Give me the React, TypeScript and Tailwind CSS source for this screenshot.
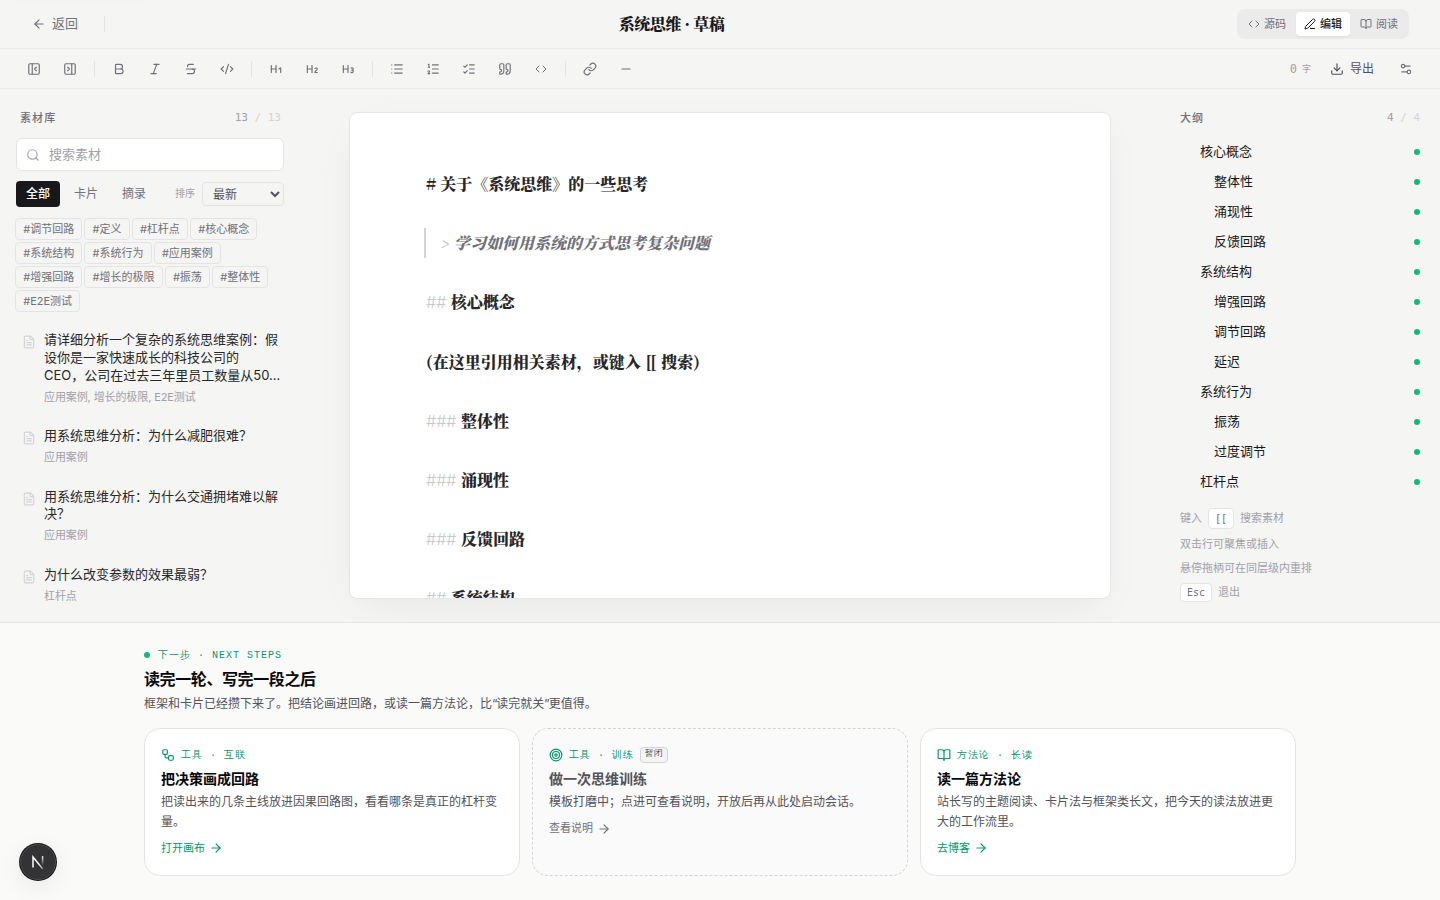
import {
  ArrowLeft,
  ArrowRight,
  Bold,
  BookOpen,
  Code,
  CodeXml,
  Download,
  FileText,
  Heading1,
  Heading2,
  Heading3,
  Italic,
  Link,
  List,
  ListChecks,
  ListOrdered,
  Minus,
  PanelLeftClose,
  PanelRightClose,
  PenLine,
  Quote,
  Search,
  Settings2,
  Strikethrough,
  Target,
  Workflow,
  type LucideIcon,
} from "lucide-react";

const toolGroups: LucideIcon[][] = [
  [PanelLeftClose, PanelRightClose],
  [Bold, Italic, Strikethrough, CodeXml],
  [Heading1, Heading2, Heading3],
  [List, ListOrdered, ListChecks, Quote, Code],
  [Link, Minus],
];

const tags = [
  "调节回路",
  "定义",
  "杠杆点",
  "核心概念",
  "系统结构",
  "系统行为",
  "应用案例",
  "增强回路",
  "增长的极限",
  "振荡",
  "整体性",
  "E2E测试",
];

const materials = [
  {
    title:
      "请详细分析一个复杂的系统思维案例：假设你是一家快速成长的科技公司的\nCEO，公司在过去三年里员工数量从50...",
    meta: "应用案例, 增长的极限, E2E测试",
  },
  { title: "用系统思维分析：为什么减肥很难？", meta: "应用案例" },
  { title: "用系统思维分析：为什么交通拥堵难以解决？", meta: "应用案例" },
  { title: "为什么改变参数的效果最弱？", meta: "杠杆点" },
];

const draft = [
  { mark: "##", text: "核心概念" },
  { mark: "", text: "(在这里引用相关素材，或键入 [[ 搜索)" },
  { mark: "###", text: "整体性" },
  { mark: "###", text: "涌现性" },
  { mark: "###", text: "反馈回路" },
  { mark: "##", text: "系统结构" },
];

const outline = [
  { text: "核心概念", level: 1 },
  { text: "整体性", level: 2 },
  { text: "涌现性", level: 2 },
  { text: "反馈回路", level: 2 },
  { text: "系统结构", level: 1 },
  { text: "增强回路", level: 2 },
  { text: "调节回路", level: 2 },
  { text: "延迟", level: 2 },
  { text: "系统行为", level: 1 },
  { text: "振荡", level: 2 },
  { text: "过度调节", level: 2 },
  { text: "杠杆点", level: 1 },
];

const steps = [
  {
    icon: Workflow,
    kind: "工具 · 互联",
    title: "把决策画成回路",
    desc: "把读出来的几条主线放进因果回路图，看看哪条是真正的杠杆变量。",
    link: "打开画布",
  },
  {
    icon: Target,
    kind: "工具 · 训练",
    title: "做一次思维训练",
    desc: "模板打磨中；点进可查看说明，开放后再从此处启动会话。",
    link: "查看说明",
    paused: true,
  },
  {
    icon: BookOpen,
    kind: "方法论 · 长读",
    title: "读一篇方法论",
    desc: "站长写的主题阅读、卡片法与框架类长文，把今天的读法放进更大的工作流里。",
    link: "去博客",
  },
];

const MONO = "font-['Liberation_Mono','WenQuanYi_Zen_Hei_Mono','WenQuanYi_Zen_Hei',monospace]";
const NUM = "font-['DejaVu_Sans_Mono',monospace]";
const SANS = "font-['Inter','Noto_Sans_CJK_SC',sans-serif]";
const SERIF = "font-['Noto_Serif_CJK_SC','Noto_Serif_SC',serif]";

const Divider = () => <div className="mx-1 h-4 w-px bg-[#e4e4e7]" />;

const Header = () => (
  <header className="flex h-[49px] shrink-0 items-center border-b border-[#e9e9ea] pl-8 pr-[31px]">
    <div className="absolute -top-12 left-4 h-9 w-32 rounded-md shadow-[0_8px_16px_rgba(0,0,0,0.05)]" />
    <button className="flex items-center gap-1.5 text-[13px] text-[#71717a]">
      <ArrowLeft size={14} />
      返回
    </button>
    <div className="ml-[26px] h-4 w-px bg-[#e4e4e7]" />
    <h1
      className={`flex-1 pl-px text-center text-base font-black tracking-tight text-[#18181b] ${SERIF}`}
    >
      系统思维 · 草稿
    </h1>
    <div className="flex gap-0.5 rounded-lg bg-[#ebebeb] p-[3px] text-[11px] text-[#71717a]">
      <button className="flex h-6 items-center gap-1 px-2">
        <Code size={12} />
        源码
      </button>
      <button className="flex h-6 items-center gap-1 rounded bg-white px-2 font-medium text-[#18181b] shadow-xs">
        <PenLine size={12} />
        编辑
      </button>
      <button className="flex h-6 items-center gap-1 px-2">
        <BookOpen size={12} />
        阅读
      </button>
    </div>
  </header>
);

const Toolbar = () => (
  <div className="flex h-10 shrink-0 items-center border-b border-[#e9e9ea] pl-[18px] pr-[18px] text-[#71717a]">
    <div className="flex items-center gap-1">
      {toolGroups.map((group, i) => (
        <div key={i} className="flex items-center gap-1">
          {i > 0 && <Divider />}
          {group.map((Icon, j) => (
            <button key={j} className="flex h-7 w-8 items-center justify-center">
              <Icon size={Icon === Code ? 12 : 14} />
            </button>
          ))}
        </div>
      ))}
    </div>
    <span className={`ml-auto flex items-center gap-[5px] text-[#a1a1aa] ${NUM} text-xs`}>
      0 <span className="text-[9px]">字</span>
    </span>
    <button className="ml-[19px] flex items-center gap-1.5 text-xs text-[#52525b]">
      <Download size={14} />
      导出
    </button>
    <button className="ml-4 flex h-7 w-8 items-center justify-center">
      <Settings2 size={14} />
    </button>
  </div>
);

const PanelTitle = ({ title, count }: { title: string; count: string }) => (
  <div className="flex h-4 items-center justify-between text-[11px]">
    <span className="font-medium tracking-[0.1em] text-[#71717a]">{title}</span>
    <span className={`text-[#a1a1aa] ${NUM}`}>
      {count} <span className="text-[#d4d4d8]">/ {count}</span>
    </span>
  </div>
);

const Library = () => (
  <aside className="w-[284px] shrink-0 pl-4 pt-[21px]">
    <div className="pl-1 pr-[3px]">
      <PanelTitle title="素材库" count="13" />
    </div>
    <div className="mt-3 flex h-[33px] items-center gap-[9px] rounded-md border border-[#e4e4e7] bg-white pl-[9px] text-[13px] text-[#a1a1aa]">
      <Search size={14} />
      搜索素材
    </div>

    <div className="mt-2.5 flex h-[26px] items-center gap-1 text-xs text-[#71717a]">
      <button className="h-[26px] w-11 rounded bg-[#18181b] font-medium text-white">全部</button>
      <button className="w-11">卡片</button>
      <button className="w-11">摘录</button>
      <span className="ml-auto mr-[3px] text-[10px] text-[#a1a1aa]">排序</span>
      <select className="h-6 w-[82px] rounded border border-[#e4e4e7] bg-transparent px-1.5 text-xs text-[#52525b]">
        <option>最新</option>
      </select>
    </div>

    <div className="-ml-px mt-[11px] flex flex-wrap gap-0.5">
      {tags.map((tag) => (
        <span
          key={tag}
          className="flex h-[22px] items-center rounded border border-[#e4e4e7] px-[7.2px] text-[11px] text-[#71717a]"
        >
          #{tag}
        </span>
      ))}
    </div>

    <div className="mt-[9px] flex flex-col gap-0.5">
      {materials.map((item) => (
        <div key={item.title} className="flex gap-2 px-1.5 py-2.5">
          <FileText size={14} className="mt-1 shrink-0 text-[#d4d4d8]" />
          <div className="-mr-1.5">
            <p className="whitespace-pre-line text-[13px] leading-snug text-[#27272a]">
              {item.title}
            </p>
            <p className="mt-1 text-[11px] leading-[16.5px] tracking-[-0.1px] text-[#a1a1aa]">
              {item.meta}
            </p>
          </div>
        </div>
      ))}
    </div>
  </aside>
);

const Editor = () => (
  <main className="flex flex-1 justify-center px-6 pb-[23px] pt-[23px]">
    <div
      className={`flex h-[487px] w-[762px] flex-col gap-[29.6px] overflow-hidden rounded-lg border border-[#e6e6e9] bg-white px-[76px] pt-14 text-base font-black leading-[29.6px] text-[#27272a] shadow-[0_12px_40px_-12px_rgba(0,0,0,0.08)] ${SERIF}`}
    >
      <p className="h-[29.6px] shrink-0"># 关于《系统思维》的一些思考</p>
      <p className="-ml-0.5 h-[29.6px] shrink-0 border-l-2 border-[#d4d4d8] pl-3.5 italic text-[#71717a]">
        <span className={`-mr-px font-light text-[#c8c8cc] ${SANS}`}>&gt; </span>
        学习如何用系统的方式思考复杂问题
      </p>
      {draft.map(({ mark, text }) => (
        <p key={text} className="h-[29.6px] shrink-0 [word-spacing:0.8px]">
          {mark && (
            <span className={`font-light text-[#c8c8cc] [word-spacing:0] ${SANS}`}>{mark} </span>
          )}
          {text}
        </p>
      ))}
    </div>
  </main>
);

const Kbd = ({ children, tall }: { children: string; tall?: boolean }) => (
  <kbd
    className={`flex items-center rounded border border-[#e4e4e7] bg-white px-1.5 text-[10px] text-[#71717a] ${NUM} ${
      tall ? "h-[21px]" : "h-[19px]"
    }`}
  >
    {children}
  </kbd>
);

const Outline = () => (
  <aside className="w-[264px] shrink-0 pl-1 pr-5 pt-[21px]">
    <PanelTitle title="大纲" count="4" />
    <ul className="mt-[11px]">
      {outline.map(({ text, level }) => (
        <li
          key={text}
          className={`flex h-[30px] items-center justify-between text-[13px] text-[#18181b] ${
            level === 1 ? "pl-5" : "pl-[34px]"
          }`}
        >
          {text}
          <span className="size-1.5 rounded-full bg-[#10b981]" />
        </li>
      ))}
    </ul>
    <div className="mt-[9px] text-[11px] text-[#a1a1aa]">
      <div className="flex h-6 items-center gap-1.5">
        键入 <Kbd tall>[[</Kbd> 搜索素材
      </div>
      <p className="flex h-7 items-center">双击行可聚焦或插入</p>
      <p className="flex h-5 items-center">悬停拖柄可在同层级内重排</p>
      <div className="flex h-7 items-center gap-1.5">
        <Kbd>Esc</Kbd> 退出
      </div>
    </div>
  </aside>
);

const NextSteps = () => (
  <section className="h-[278px] shrink-0 border-t border-[#e4e4e7] bg-[#fafaf9] px-36 pt-6">
    <div className={`flex h-4 items-center gap-2 text-[10px] tracking-[1px] text-[#059669] ${MONO}`}>
      <span className="size-1.5 rounded-full bg-[#10b981]" />
      下一步 · NEXT STEPS
    </div>
    <h2 className="mt-1 text-base font-semibold leading-6 tracking-tight text-[#09090b]">
      读完一轮、写完一段之后
    </h2>
    <p className="mt-[3px] text-xs leading-5 text-[#52525b]">
      框架和卡片已经攒下来了。把结论画进回路，或读一篇方法论，比
      <span className="tracking-[-1px]">“</span>读完就关
      <span className="tracking-[-1px]">”</span>更值得。
    </p>
    <div className="mt-3.5 grid grid-cols-3 gap-3">
      {steps.map(({ icon: Icon, kind, title, desc, link, paused }) => (
        <a
          key={title}
          className={`h-[148px] rounded-2xl border p-4 ${
            paused ? "border-dashed border-[#d4d4d8] bg-[#fafafa]" : "border-[#e4e4e7] bg-white"
          }`}
        >
          <div className="flex h-5 items-center gap-1.5 text-[#059669]">
            <Icon size={14} />
            <span className={`text-[10px] tracking-[1px] ${MONO}`}>{kind}</span>
            {paused && (
              <span
                className={`flex h-4 items-center rounded border border-[#d4d4d8] bg-[#f4f4f5] px-1 text-[9px] text-[#52525b] ${MONO}`}
              >
                暂闭
              </span>
            )}
          </div>
          <h3
            className={`mt-[3px] text-sm font-semibold leading-[21px] ${
              paused ? "text-[#52525b]" : "text-[#09090b]"
            }`}
          >
            {title}
          </h3>
          <p className="mt-[3px] text-xs leading-[19.5px] text-[#52525b]">{desc}</p>
          <div
            className={`mt-2 flex h-[18px] items-center gap-1 text-[11px] ${
              paused ? "text-[#71717a]" : "text-[#059669]"
            }`}
          >
            {link}
            <ArrowRight size={14} />
          </div>
        </a>
      ))}
    </div>
  </section>
);

const DevBadge = () => (
  <div className="absolute bottom-5 left-5 flex size-9 items-center justify-center rounded-full border border-[#4a4a4e] bg-[#333335] shadow-[0_0_0_1px_#171717,0_6px_24px_rgba(0,0,0,0.08)]">
    <svg width="14" height="14" viewBox="0 0 14 14" fill="none" strokeWidth="1.5">
      <defs>
        <linearGradient id="stem" x1="0" y1="1" x2="0" y2="9.5" gradientUnits="userSpaceOnUse">
          <stop stopColor="white" />
          <stop offset="1" stopColor="white" stopOpacity="0.1" />
        </linearGradient>
        <linearGradient id="leg" x1="8" y1="8" x2="12" y2="14" gradientUnits="userSpaceOnUse">
          <stop stopColor="white" />
          <stop offset="1" stopColor="white" stopOpacity="0.4" />
        </linearGradient>
      </defs>
      <path d="M2 12.5V2L11.8 14" stroke="url(#leg)" />
      <path d="M11.6 1.2v9" stroke="url(#stem)" />
    </svg>
  </div>
);

const App = () => (
  <div
    lang="zh-CN"
    className={`relative flex h-[900px] w-[1440px] flex-col overflow-hidden bg-[#f5f5f3] ${SANS}`}
  >
    <Header />
    <Toolbar />
    <div className="flex min-h-0 flex-1">
      <Library />
      <Editor />
      <Outline />
    </div>
    <NextSteps />
    <DevBadge />
  </div>
);

export default App;
